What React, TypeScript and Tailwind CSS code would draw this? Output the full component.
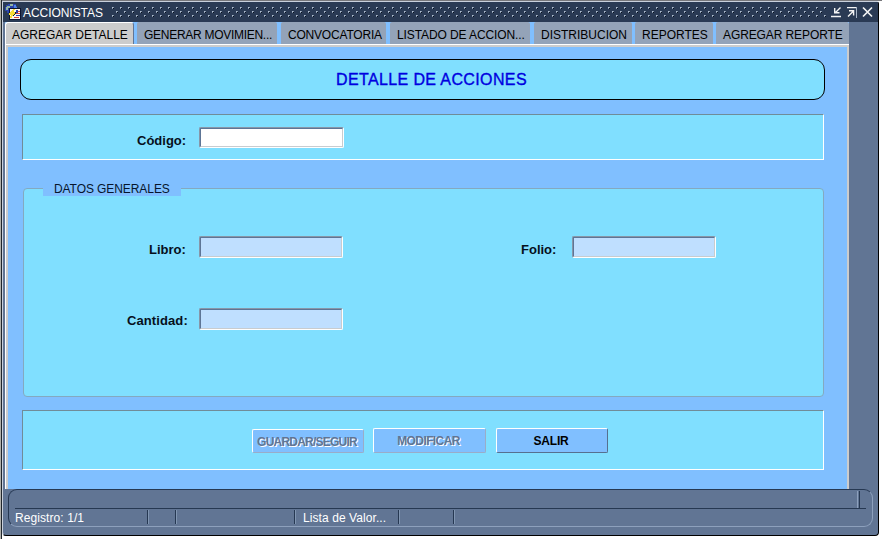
import type { ReactNode } from 'react';

const tabs = [
  { label: 'AGREGAR DETALLE', cls: 'w-[129px] pl-[6px]', active: true },
  { label: 'GENERAR MOVIMIEN...', cls: 'w-[140px] pl-[7px] ml-[3px] tracking-[-0.28px]' },
  { label: 'CONVOCATORIA', cls: 'w-[105px] pl-[7px] ml-[4px] tracking-[-0.2px]' },
  { label: 'LISTADO DE ACCION...', cls: 'w-[140px] pl-[7px] ml-[4px] tracking-[-0.1px]' },
  { label: 'DISTRIBUCION', cls: 'w-[98px] pl-[7px] ml-[4px]' },
  { label: 'REPORTES', cls: 'w-[78px] pl-[7px] ml-[3px]' },
  { label: 'AGREGAR REPORTE', cls: 'w-[133px] pl-[7px] ml-[3px] tracking-[-0.1px]' },
];

function AppIcon() {
  return (
    <svg width="18" height="18" viewBox="0 0 18 18" shapeRendering="crispEdges">
      <path d="M3 1h8v2h1v4H4v3H2V8H0V4h1V2h2z" fill="#2b44ad" />
      <path d="M2 3h3v2H3v2H1V4h1zM5 1h3v2H5z" fill="#93b5a4" />
      <path d="M9 2h2v2h1v2H9z" fill="#4f86e8" />
      <path d="M4 5h12v12H4z" fill="#0d1430" />
      <path d="M5 6h10v10H5z" fill="#fbf6ee" />
      <path d="M11 7h2v3h-2z" fill="#2d3dae" />
      <path d="M13 8h2v1h-2zM11 10h4v1h-4zM9 14h5v1H9z" fill="#d4433c" />
      <path d="M11 12h4v1h-4z" fill="#2d3dae" />
      <path d="M8 6h2v1H9v2h1v2H9v1H8v1H7v2H5v-2h1v-1H4v-2h1V9h1V8h1V7h1z" fill="#f7dc35" />
      <path d="M4 9h1v1H4zM10 9h1v2h-1zM9 11h1v1H9zM8 12h1v1H8z" fill="#0d1430" />
    </svg>
  );
}

function WindowControls() {
  return (
    <svg className="mt-[4px] ml-[5px] shrink-0" width="44" height="13" fill="none" stroke="#f4f4f4" strokeWidth="1.400">
      <path d="M0 10.500h10M9.500 1.500L4.500 6.500M3.700 2v4.800H8.500" />
      <path d="M16 1.600h10M17 10.500l5.500-5.500M18 4.700h4.600V9.500" />
      <path d="M25.500 1v11" stroke="#a9b6c8" strokeWidth="1" />
      <path d="M32 1.500l9 9M41 1.500l-9 9" strokeWidth="1.700" />
    </svg>
  );
}

function Field({ white = false, cls }: { white?: boolean; cls: string }) {
  return (
    <div className={`rounded-[2px] border border-t-[#8796a8] border-l-[#8796a8] border-r-white border-b-white ${cls}`}>
      <div className={`h-full w-full border border-t-[#5d7596] border-l-[#5d7596] border-r-[#c8ccd0] border-b-[#c8ccd0] ${white ? 'bg-white' : 'bg-[#bfdfff]'}`} />
    </div>
  );
}

function Label({ children, cls }: { children: ReactNode; cls: string }) {
  return <span className={`text-[13px] leading-[16px] font-bold whitespace-nowrap text-[#06101c] ${cls}`}>{children}</span>;
}

function Cell({ children, cls }: { children?: ReactNode; cls: string }) {
  return <div className={`h-[14px] border-r border-[#263852] whitespace-nowrap shadow-[1px_0_0_#8196b2] ${cls}`}>{children}</div>;
}

export default function App() {
  return (
    <div className="flex h-[539px] w-[882px] overflow-hidden bg-white font-['Liberation_Sans',Arial,sans-serif] text-[12px]">
      <div className="h-full w-[2px] border-r border-l border-r-[#20262c] border-l-[#b0b0ac]" />
      <div className="flex h-full w-[880px] flex-col border-t border-[#77777b]">
        <div className="flex h-[535px] w-[877px] flex-col rounded-tr-[3px] rounded-b-[4px] border border-t-[#c9d0dc] border-r-black border-b-black border-l-[#c9d0dc] bg-[#617594]">
          <header className="flex h-[20px] shrink-0 items-start bg-[#2a3a54] pl-[2px]">
            <div className="mt-px shrink-0"><AppIcon /></div>
            <span className="mt-[3px] w-[85px] shrink-0 leading-[16px] tracking-[-0.05px] whitespace-nowrap text-white">ACCIONISTAS</span>
            <svg className="mt-[4px] shrink-0" width="718" height="13" shapeRendering="crispEdges">
              <defs>
                <pattern id="grip" width="8" height="8" patternUnits="userSpaceOnUse">
                  <path d="M4 1h2v1H5v1H4zM0 5h2v1H1v1H0z" fill="#8595ab" />
                  <path d="M5 2h1v1H5zM1 6h1v1H1z" fill="#050d1a" />
                  <path d="M4 1h1v1H4zM0 5h1v1H0z" fill="#b4c0d0" />
                </pattern>
              </defs>
              <rect x="3" width="715" height="13" fill="url(#grip)" />
            </svg>
            <WindowControls />
          </header>

          <div className="flex h-[467px] shrink-0 pl-[2px]">
            <div className="flex w-[844px] flex-col">
              <nav className="flex h-[22px] bg-[#80bfff]">
                {tabs.map((t) => (
                  <div
                    key={t.label}
                    className={`h-[22px] shrink-0 leading-[16px] whitespace-nowrap text-black ${t.active ? 'rounded-t-[3px] border-t border-r border-l border-t-white border-r-[#617594] border-l-white bg-[#ccc] pt-[4px]' : 'rounded-t-[2px] bg-[#94a3b8] pt-[5px]'} ${t.cls}`}
                  >
                    {t.label}
                  </div>
                ))}
              </nav>
              <main className="flex h-[445px] flex-col border-t border-l border-white bg-[#ccc] pt-[2px] pr-[2px] pl-[2px]">
                <div className="flex h-full flex-col bg-[#80bfff] pt-[12px] pl-[12px]">
                  <h1 className="flex h-[41px] w-[805px] shrink-0 items-center justify-center rounded-[11px] border border-black bg-[#80dfff] pl-[18px] text-[16px] tracking-[0.38px] text-[#0000e0] [-webkit-text-stroke:0.35px_#0000e0]">
                    DETALLE DE ACCIONES
                  </h1>
                  <section className="mt-[14px] ml-[2px] flex h-[46px] w-[802px] shrink-0 border border-t-[#708c98] border-r-white border-b-white border-l-[#708c98] bg-[#80dfff]">
                    <Label cls="mt-[18px] ml-[114px] w-[62px]">Código:</Label>
                    <Field white cls="mt-[12px] h-[21px] w-[145px]" />
                  </section>
                  <fieldset className="mt-[28px] ml-[3px] flex h-[209px] w-[801px] shrink-0 flex-col">
                    <div className="relative h-[209px] shrink-0 rounded-[4px] border border-[#84a9c0] bg-[#80dfff]">
                      <legend className="absolute -top-[6px] left-[19px] h-[13px] w-[138px] bg-[#80bfff] pl-[11px] leading-[12px] tracking-[-0.08px] whitespace-nowrap text-[#07152c]">
                        DATOS GENERALES
                      </legend>
                      <div className="flex pt-[47px]">
                        <Label cls="mt-[6px] ml-[125px] w-[50px]">Libro:</Label>
                        <Field cls="h-[22px] w-[144px]" />
                        <Label cls="mt-[6px] ml-[178px] w-[51px]">Folio:</Label>
                        <Field cls="h-[22px] w-[144px]" />
                      </div>
                      <div className="flex pt-[50px]">
                        <Label cls="mt-[5px] ml-[103px] w-[72px] tracking-[0.1px]">Cantidad:</Label>
                        <Field cls="h-[22px] w-[144px]" />
                      </div>
                    </div>
                  </fieldset>
                  <section className="mt-[13px] ml-[2px] flex h-[60px] w-[802px] shrink-0 border border-t-[#708c98] border-r-white border-b-white border-l-[#708c98] bg-[#80dfff] pt-[17px] pl-[229px] text-[12px] font-bold">
                    <button className="mt-px h-[24px] w-[112px] rounded-[2px] border border-t-white border-r-[#9aacc8] border-b-[#9aacc8] border-l-white bg-[#80bfff] pt-px pr-[2px] tracking-[-0.78px] whitespace-nowrap text-[#617594] [text-shadow:1px_1px_0_#fff]">GUARDAR/SEGUIR</button>
                    <button className="ml-[9px] h-[25px] w-[113px] rounded-[2px] border border-t-white border-r-[#9aacc8] border-b-[#9aacc8] border-l-white bg-[#80bfff] pr-[2px] tracking-[-0.6px] text-[#617594] [text-shadow:1px_1px_0_#fff]">MODIFICAR</button>
                    <button className="ml-[10px] h-[25px] w-[112px] rounded-[2px] border border-t-white border-r-[#56708f] border-b-[#56708f] border-l-white bg-[#80bfff] pr-[2px] tracking-[-0.2px] text-black">SALIR</button>
                  </section>
                </div>
              </main>
            </div>
          </div>

          <footer className="ml-[5px] h-[38px] w-[865px] shrink-0 rounded-[9px] border border-t-[#263852] border-r-[#8da0bc] border-b-[#8da0bc] border-l-[#263852] px-[6px] text-white">
            <div className="flex h-[19px] justify-end border-b border-[#263852] pr-[6px]">
              <div className="mt-px h-[17px] w-[3px] border-r border-l border-r-[#263852] border-l-[#8da0bc]" />
            </div>
            <div className="flex pt-px leading-[16px]">
              <Cell cls="w-[133px] tracking-[0.08px]">Registro: 1/1</Cell>
              <Cell cls="w-[28px]" />
              <Cell cls="w-[119px]" />
              <Cell cls="w-[104px] pl-[8px] tracking-[0.08px]">Lista de Valor...</Cell>
              <Cell cls="w-[55px]" />
            </div>
          </footer>
        </div>
      </div>
    </div>
  );
}
